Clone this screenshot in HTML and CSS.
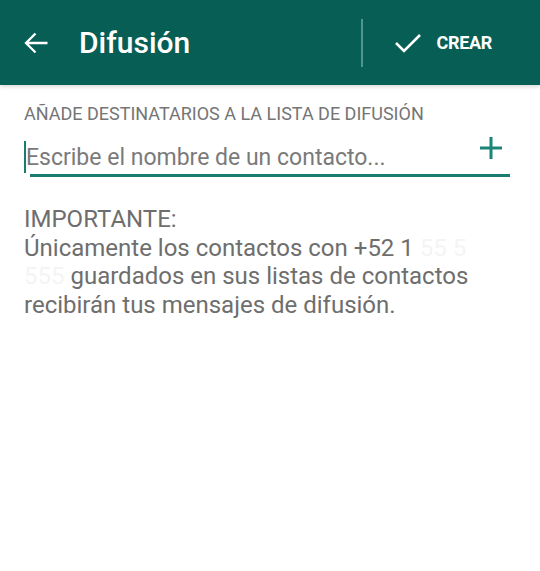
FILE: index.html
```html
<!DOCTYPE html>
<html lang="es">
<head>
    <meta charset="UTF-8">
    <meta name="viewport" content="width=device-width, initial-scale=1.0">
    <title>Difusión</title>
    <link rel="stylesheet" href="styles.css">
</head>
<body>
    <header class="toolbar">
        <a class="back" href="#">
            <svg width="24" height="24" viewBox="0 0 24 24"><path d="M23.5 12H2M11.5 2.5L2 12l9.5 9.5" fill="none" stroke="#fff" stroke-width="2.3"/></svg>
        </a>
        <h1 class="title">Difusión</h1>
        <div class="divider"></div>
        <a class="create" href="#">
            <svg width="28" height="22" viewBox="0 0 28 22"><path d="M2 11l8 8L26 3" fill="none" stroke="#fff" stroke-width="2.6"/></svg>
            <span>CREAR</span>
        </a>
    </header>

    <main class="content">
        <div class="section-label">AÑADE DESTINATARIOS A LA LISTA DE DIFUSIÓN</div>
        <div class="search">
            <span class="caret"></span>
            <input type="text" placeholder="Escribe el nombre de un contacto...">
            <svg class="plus" width="22" height="22" viewBox="0 0 22 22"><path d="M11 0v22M0 11h22" stroke="#1d8577" stroke-width="3"/></svg>
        </div>
        <p class="notice">
            IMPORTANTE:<br>
            Únicamente los contactos con +52 1 <span class="hidden">55 5</span><br>
            <span class="hidden">555</span> guardados en sus listas de contactos<br>
            recibirán tus mensajes de difusión.
        </p>
    </main>
</body>
</html>
```

FILE: styles.css
```css
* {
    margin: 0;
    padding: 0;
    box-sizing: border-box;
    font-family: Roboto, 'Noto Sans', sans-serif;
}

body {
    background: white;
    color: #707070;
}

.toolbar {
    height: 85px;
    background: #075e54;
    display: flex;
    align-items: center;
    padding: 0 24px;
    box-shadow: 0 2px 4px rgba(0,0,0,0.15);
}

.back {
    display: flex;
    width: 24px;
    height: 24px;
    margin-right: 31px;
}

.title {
    color: white;
    font-size: 30px;
    font-weight: 500;
    flex: 1;
}

.divider {
    width: 2px;
    height: 48px;
    background: #4f978d;
    margin-right: 31px;
}

.create {
    display: flex;
    align-items: center;
    gap: 14px;
    color: white;
    text-decoration: none;
    font-size: 18px;
    font-weight: bold;
    margin-right: 24px;
}

.create span {
    letter-spacing: -0.3px;
}

.content {
    padding: 0 24px;
}

.section-label {
    margin-top: 18px;
    font-size: 18px;
    color: #757575;
}

.search {
    position: relative;
    display: flex;
    align-items: center;
    margin-top: 15px;
    height: 36px;
}

.search::after {
    content: "";
    position: absolute;
    left: 6px;
    right: 6px;
    bottom: -2px;
    height: 3px;
    background: #1a7d70;
}

.caret {
    width: 2px;
    height: 32px;
    background: #1a7d70;
}

.search input {
    flex: 1;
    border: none;
    outline: none;
    font-size: 23px;
    color: #777;
    background: transparent;
    padding: 0;
}

.search input::placeholder {
    color: #7a7a7a;
}

.plus {
    position: absolute;
    right: 14px;
    top: -2px;
}

.notice {
    margin-top: 30px;
    font-size: 24px;
    line-height: 28.5px;
    color: #6e6e6e;
}

.hidden {
    color: #f4f4f4;
}
```
